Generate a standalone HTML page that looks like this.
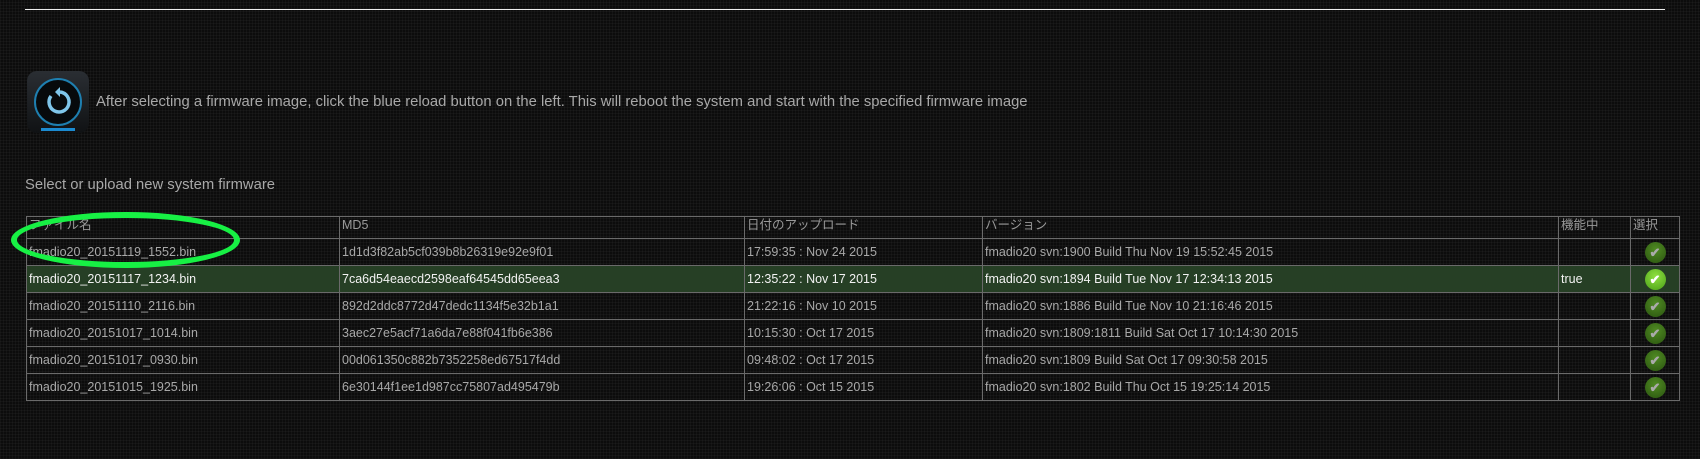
<!DOCTYPE html>
<html><head><meta charset="utf-8"><style>
body{margin:0;width:1700px;height:459px;overflow:hidden;background:#0c0c0c;
background-image:repeating-linear-gradient(90deg,rgba(255,255,255,0.03) 0 1px,transparent 1px 3px),repeating-linear-gradient(0deg,rgba(255,255,255,0.03) 0 1px,transparent 1px 3px);
font-family:"Liberation Sans","Noto Sans CJK JP",sans-serif;color:#a8a8a8;position:relative}
.hr{position:absolute;left:25px;top:9px;width:1640px;height:1px;background:#eee}
.icon{position:absolute;left:27px;top:71px;width:62px;height:62px;border-radius:10px;background:linear-gradient(#2a2e33,#101214);}
.icon .c{position:absolute;left:7px;top:7px;width:44px;height:44px;border-radius:50%;border:2px solid #1e7fb0;background:#070a0c}
.icon .b{position:absolute;left:14px;top:57px;width:34px;height:3px;background:#1b8ad0}
.t1{position:absolute;left:96px;top:94px;font-size:14.8px}
.t2{position:absolute;left:25px;top:177px;font-size:14.8px}
table{position:absolute;left:26px;top:216px;width:1654px;border-collapse:collapse;font-size:12.5px;line-height:15px}
td{border:1px solid #6a6a6a;padding:0 2px;height:26px;white-space:nowrap;vertical-align:middle}
tr.h td{height:20px;color:#999;vertical-align:top;padding-top:1px;padding-bottom:0}
tr.a td{background:#263f25;color:#f2f2f2}
.ck{display:inline-block;width:21px;height:21px;border-radius:50%;background:radial-gradient(circle at 50% 35%,#4f8a22,#2a5410);color:#aaa;font-size:13px;text-align:center;line-height:21px;font-weight:bold}
tr.a .ck{background:radial-gradient(circle at 50% 35%,#8fe040,#4aa018);color:#fff}
.ring{position:absolute;left:11px;top:212px;width:229px;height:56px;border:6px solid #17f044;border-radius:50%;box-sizing:border-box}
</style></head><body>
<div class="hr"></div>
<div class="icon"><div class="c"><svg width="44" height="44" viewBox="0 0 44 44"><path d="M15 16 A10 10 0 1 0 24 12" fill="none" stroke="#7fc6ea" stroke-width="3.5"/><path d="M24 7 L24 17 L19 12 Z" fill="#7fc6ea"/></svg></div><div class="b"></div></div>
<div class="t1">After selecting a firmware image, click the blue reload button on the left. This will reboot the system and start with the specified firmware image</div>
<div class="t2">Select or upload new system firmware</div>
<table>
<colgroup><col style="width:313px"><col style="width:405px"><col style="width:238px"><col style="width:576px"><col style="width:72px"><col></colgroup>
<tr class="h"><td>ファイル名</td><td>MD5</td><td>日付のアップロード</td><td>バージョン</td><td>機能中</td><td>選択</td></tr>
<tr><td>fmadio20_20151119_1552.bin</td><td>1d1d3f82ab5cf039b8b26319e92e9f01</td><td>17:59:35 : Nov 24 2015</td><td>fmadio20 svn:1900 Build Thu Nov 19 15:52:45 2015</td><td></td><td style="text-align:center"><span class="ck">✔</span></td></tr>
<tr class="a"><td>fmadio20_20151117_1234.bin</td><td>7ca6d54eaecd2598eaf64545dd65eea3</td><td>12:35:22 : Nov 17 2015</td><td>fmadio20 svn:1894 Build Tue Nov 17 12:34:13 2015</td><td>true</td><td style="text-align:center"><span class="ck">✔</span></td></tr>
<tr><td>fmadio20_20151110_2116.bin</td><td>892d2ddc8772d47dedc1134f5e32b1a1</td><td>21:22:16 : Nov 10 2015</td><td>fmadio20 svn:1886 Build Tue Nov 10 21:16:46 2015</td><td></td><td style="text-align:center"><span class="ck">✔</span></td></tr>
<tr><td>fmadio20_20151017_1014.bin</td><td>3aec27e5acf71a6da7e88f041fb6e386</td><td>10:15:30 : Oct 17 2015</td><td>fmadio20 svn:1809:1811 Build Sat Oct 17 10:14:30 2015</td><td></td><td style="text-align:center"><span class="ck">✔</span></td></tr>
<tr><td>fmadio20_20151017_0930.bin</td><td>00d061350c882b7352258ed67517f4dd</td><td>09:48:02 : Oct 17 2015</td><td>fmadio20 svn:1809 Build Sat Oct 17 09:30:58 2015</td><td></td><td style="text-align:center"><span class="ck">✔</span></td></tr>
<tr><td>fmadio20_20151015_1925.bin</td><td>6e30144f1ee1d987cc75807ad495479b</td><td>19:26:06 : Oct 15 2015</td><td>fmadio20 svn:1802 Build Thu Oct 15 19:25:14 2015</td><td></td><td style="text-align:center"><span class="ck">✔</span></td></tr>
</table>
<div class="ring"></div>
</body></html>
